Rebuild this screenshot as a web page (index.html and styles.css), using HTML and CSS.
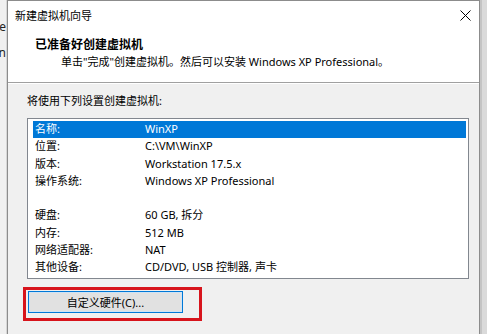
FILE: index.html
```html
<!DOCTYPE html>
<html>
  <head>
    <title>新建虚拟机向导</title>
    <meta charset="utf-8">
    <link rel="stylesheet" href="styles.css">
  </head>
  <body>
    <div class="desk">
      <div class="behind-left">
        <span class="peek">e</span>
        <span class="peek">n</span>
      </div>

      <div class="dialog">
        <div class="titlebar">
          <span class="title">新建虚拟机向导</span>
          <svg class="close" width="11" height="11" viewBox="0 0 11 11">
            <path d="M0.5 0.5L10.5 10.5M10.5 0.5L0.5 10.5" stroke="#000" stroke-width="1" fill="none"/>
          </svg>
        </div>

        <div class="header">
          <div class="header-title">已准备好创建虚拟机</div>
          <div class="header-sub">单击"完成"创建虚拟机。然后可以安装 Windows XP Professional。</div>
        </div>

        <div class="body">
          <div class="intro">将使用下列设置创建虚拟机:</div>
          <div class="summary">
            <div class="row row-selected"><span class="key">名称:</span><span>WinXP</span></div>
            <div class="row"><span class="key">位置:</span><span>C:\VM\WinXP</span></div>
            <div class="row"><span class="key">版本:</span><span>Workstation 17.5.x</span></div>
            <div class="row"><span class="key">操作系统:</span><span>Windows XP Professional</span></div>
            <div class="row"></div>
            <div class="row"><span class="key">硬盘:</span><span>60 GB, 拆分</span></div>
            <div class="row"><span class="key">内存:</span><span>512 MB</span></div>
            <div class="row"><span class="key">网络适配器:</span><span>NAT</span></div>
            <div class="row"><span class="key">其他设备:</span><span>CD/DVD, USB 控制器, 声卡</span></div>
          </div>
          <div class="highlight">
            <button class="btn">自定义硬件(C)...</button>
          </div>
        </div>
      </div>

      <div class="behind-right"></div>
    </div>
  </body>
</html>
```

FILE: styles.css
```css
* {
  box-sizing: border-box;
}
html, body {
  margin: 0;
  height: 100%;
}
body {
  font-family: "Noto Sans", "Noto Sans CJK SC", sans-serif;
  font-size: 11px;
  color: #000;
  background-color: #f0f0f0;
  overflow: hidden;
}
.desk {
  display: flex;
  height: 334px;
}
.behind-left {
  width: 7px;
  flex: 0 0 auto;
  display: flex;
  flex-direction: column;
  align-items: flex-end;
  padding-top: 19px;
  background-color: #f0f0f0;
  border-right: 1px solid #d6d6d6;
  overflow: hidden;
}
.peek {
  display: block;
  width: 12px;
  height: 26px;
  line-height: 16px;
  text-align: right;
  font-size: 12px;
  color: #222;
}
.dialog {
  flex: 1 1 auto;
  display: flex;
  flex-direction: column;
  border: 1px solid #8c8c8c;
  border-bottom: none;
  background-color: #f0f0f0;
}
.behind-right {
  width: 7px;
  flex: 0 0 auto;
  border-left: 2px solid #c4c4c4;
  background-color: #dadada;
}
.titlebar {
  height: 30px;
  display: flex;
  align-items: center;
  justify-content: space-between;
  padding: 0 8px 2px 7px;
  background-color: #fff;
}
.header {
  height: 52px;
  padding: 5px 0 0 27px;
  background-color: #fff;
  border-bottom: 1px solid #a0a0a0;
}
.header-title {
  font-size: 12px;
  font-weight: 700;
  line-height: 17px;
}
.header-sub {
  line-height: 17px;
  padding-left: 26px;
}
.body {
  flex: 1 1 auto;
  padding: 8px 10px 0 19px;
  border-top: 1px solid #fff;
}
.intro {
  line-height: 17px;
  margin-bottom: 9px;
}
.summary {
  height: 161px;
  padding: 2px 2px 0 5px;
  background-color: #fff;
  border: 1px solid #82878f;
}
.row {
  display: flex;
  height: 17.25px;
  line-height: 16px;
  padding-left: 2px;
  white-space: nowrap;
}
.row-selected {
  color: #fff;
  background-color: #0078d7;
}
.key {
  width: 110px;
  flex: 0 0 auto;
}
.highlight {
  align-self: flex-start;
  width: 179px;
  margin: 8px 0 0 -4px;
  padding: 1px 16px 5px 2px;
  border: 3px solid #d7141c;
}
.btn {
  display: block;
  width: 155px;
  height: 22px;
  padding: 0;
  font-family: inherit;
  font-size: 11px;
  color: #000;
  background-color: #e1e1e1;
  border: 1px solid #0078d7;
  box-shadow: inset 0 0 0 1px #cfe3f5;
}
```
